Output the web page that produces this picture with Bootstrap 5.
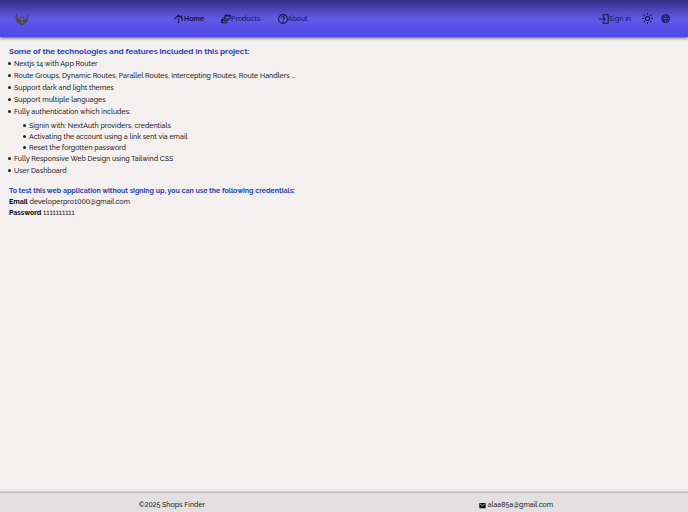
<!DOCTYPE html>
<html lang="en">
<head>
<meta charset="utf-8">
<meta name="viewport" content="width=device-width, initial-scale=1">
<title>Shops Finder</title>
<link href="https://cdn.jsdelivr.net/npm/bootstrap@5.3.0/dist/css/bootstrap.min.css" rel="stylesheet">
<style>
body { font-family: Raleway, Lato, "Open Sans", sans-serif; font-size: 7px; font-weight: 500; line-height: 11px; color: #1c1c1c; background: #f3f0ef; }
.topbar { height: 37px; background: linear-gradient(#332e85 0, #433ca5 6px, #544dca 13px, #6059e8 19px, #5048e5 36px); box-shadow: 0 1px 3px rgba(0,0,0,.7); }
.topbar a, .topbar button { color: #16163c; text-decoration: none; }
.topbar button { background: none; border: 0; padding: 0; }
.topbar svg { display: block; }
.main-links { gap: 17px; padding-left: 2px; }
.tools { gap: 11px; padding-right: 18px; }
.brand { padding-left: 15px; }
.content { padding: 9px; }
.headline { font-size: 7px; line-height: 11px; font-weight: 700; color: #2340b5; margin: 0; }
.headline-lg { font-size: 8px; margin-bottom: 1px; }
.features, .sub-features { margin: 0; list-style: none; }
.features { padding-left: 5px; }
.features > li { padding-bottom: 1px; }
.features > li.has-sub { padding-bottom: 0; }
.sub-features { padding: 3px 0 0 15px; }
.features li > span::before { content: ""; display: inline-block; width: 3px; height: 3px; border-radius: 50%; background: #222; margin: 0 3px 1px -6px; vertical-align: middle; }
.account { margin-top: 8px; }
.account b { color: #000; }
.sitefoot { padding: 6px 0 2px; background: #e2e0e1; border-top: 1px solid #bfbdbd; box-shadow: 0 -1px 1px #d5d2d2; }
.sitefoot a { color: inherit; text-decoration: none; }
</style>
</head>
<body class="d-flex flex-column min-vh-100">
<header class="topbar">
  <div class="row g-0 h-100 align-items-center">
    <div class="col-3 brand">
      <a href="#" aria-label="Shops Finder home">
        <svg width="14" height="14" viewBox="0 0 28 28">
          <path d="M3 3C0 11 1 20 9 24l5 3 5-3c8-4 9-13 6-21-1 7-3 11-6 13l-2-8-3 4-3-4-2 8C6 13 4 9 3 3Z" fill="#3b3a50"/>
          <path d="M4 7c0 8 3 13 8 14M24 7c0 8-3 13-8 14M3 13c1 6 4 9 9 11M25 13c-1 6-4 9-9 11" fill="none" stroke="#67617a" stroke-width="1.2"/>
          <path d="m11 11 3 3 3-3-1 8-2 5-2-5Z" fill="#8f877f"/><path d="m12 15 2 2 2-2-2 6Z" fill="#25233c"/>
        </svg>
      </a>
    </div>
    <nav class="col d-flex main-links" aria-label="Main">
      <a href="#" class="d-flex align-items-center fw-bold" aria-current="page">
        <svg width="10" height="10" viewBox="0 0 24 24" fill="none" stroke="currentColor" stroke-width="2.5"><path d="M1 12 11 3l10 9M18 8V3"/><circle cx="11" cy="13" r="2.2" fill="currentColor" stroke="none"/><path d="M11 17v5M19 12v4"/></svg>Home</a>
      <a href="#" class="d-flex align-items-center">
        <svg width="10" height="10" viewBox="0 0 24 24" fill="none" stroke="currentColor" stroke-width="2.5"><path d="M10 3h13l-2 9H8zM10 5h13M5 8l-1 8h13M2 12l-1 9h13v-2"/></svg>Products</a>
      <a href="#" class="d-flex align-items-center">
        <svg width="10" height="10" viewBox="0 0 24 24" fill="none" stroke="currentColor" stroke-width="2.5"><circle cx="12" cy="12" r="10.5"/><path d="M8.5 9.5c0-5 7-4.500 7-.5 0 3-3.500 2.500-3.500 6M12 17v2.500"/></svg>About</a>
    </nav>
    <div class="col-auto d-flex align-items-center tools">
      <a href="#" class="d-flex align-items-center">
        <svg width="10" height="10" viewBox="0 0 24 24" fill="none" stroke="currentColor" stroke-width="2.5"><path d="M10 7V2h12v20H10v-5M0 12h15M11 8l4 4-4 4"/></svg>Sign in</a>
      <div class="d-flex align-items-center gap-2">
        <button type="button" aria-label="Toggle theme">
          <svg width="11" height="11" viewBox="0 0 24 24" fill="none" stroke="currentColor" stroke-width="2.2"><circle cx="12" cy="12" r="4.500"/><path d="M12 0v4M12 20v4M0 12h4M20 12h4M3.500 3.500l3 3M17.500 17.500l3 3M3.500 20.500l3-3M17.500 6.500l3-3"/></svg></button>
        <button type="button" aria-label="Change language">
          <svg width="9" height="9" viewBox="0 0 24 24" fill="none" stroke="currentColor" stroke-width="2.500"><circle cx="12" cy="12" r="10.500"/><ellipse cx="12" cy="12" rx="5" ry="10.500"/><path d="M2 8.500h20M2 15.500h20"/></svg></button>
      </div>
    </div>
  </div>
</header>
<main class="content flex-grow-1">
  <h1 class="headline headline-lg">Some of the technologies and features included in this project:</h1>
  <ul class="features">
    <li><span>Nextjs 14 with App Router</span></li>
    <li><span>Route Groups, Dynamic Routes, Parallel Routes, Intercepting Routes, Route Handlers ...</span></li>
    <li><span>Support dark and light themes</span></li>
    <li><span>Support multiple languages</span></li>
    <li class="has-sub"><span>Fully authentication which includes:</span>
      <ul class="sub-features">
        <li><span>Signin with: NextAuth providers, credentials</span></li>
        <li><span>Activating the account using a link sent via email</span></li>
        <li><span>Reset the forgotten password</span></li>
      </ul>
    </li>
    <li><span>Fully Responsive Web Design using Tailwind CSS</span></li>
    <li><span>User Dashboard</span></li>
  </ul>
  <section class="account">
    <h2 class="headline">To test this web application without signing up, you can use the following credentials:</h2>
    <div><b>Email</b> developerpro1000@gmail.com</div>
    <div><b>Password</b> 1111111111</div>
  </section>
</main>
<footer class="sitefoot">
  <div class="row g-0 text-center">
    <div class="col-6">©2025 Shops Finder</div>
    <div class="col-6"><a href="mailto:alaa85a@gmail.com"><svg width="7" height="7" viewBox="0 0 24 24"><rect x="1" y="3" width="22" height="18" rx="2" fill="#111"/><path d="m4 7 8 5 8-5" fill="none" stroke="#e2e0e1" stroke-width="2.500"/></svg> alaa85a@gmail.com</a></div>
  </div>
</footer>
<script src="https://cdn.jsdelivr.net/npm/bootstrap@5.3.0/dist/js/bootstrap.bundle.min.js"></script>
</body>
</html>
